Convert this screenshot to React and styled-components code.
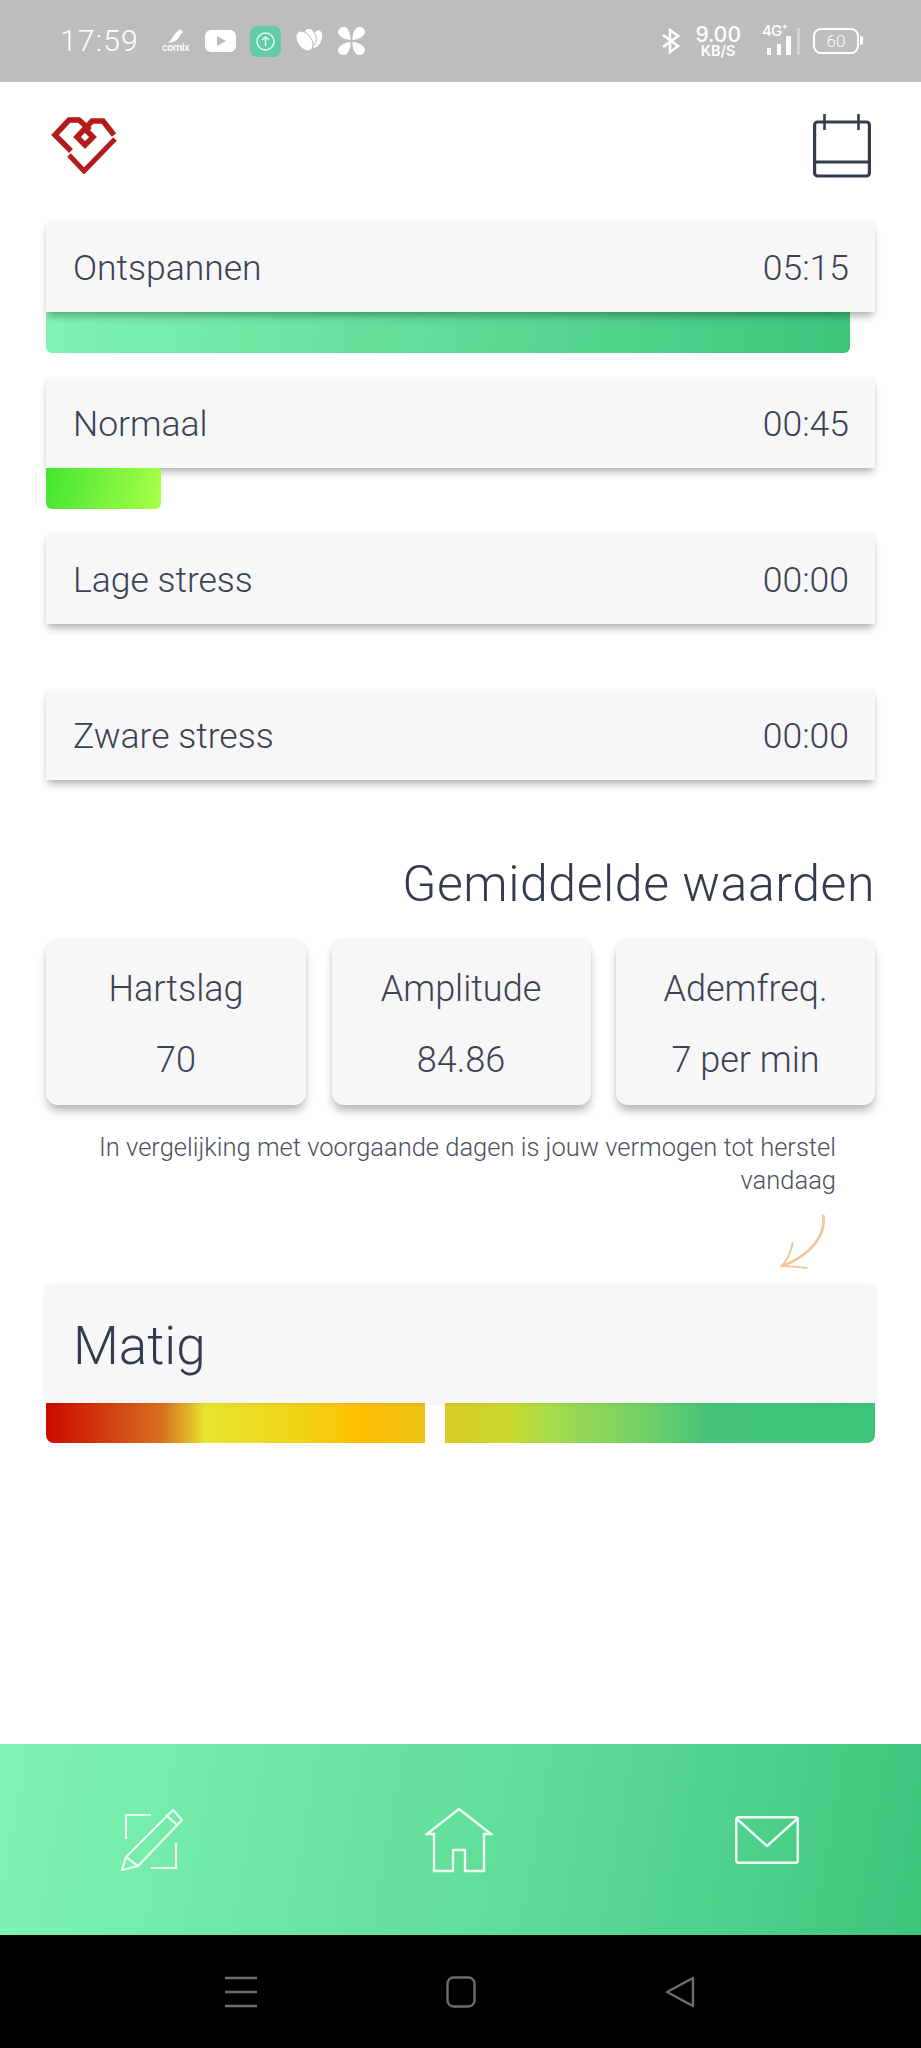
import React from "react";
import styled, { createGlobalStyle } from "styled-components";

const Global = createGlobalStyle`
  html, body { margin: 0; padding: 0; background: #fff; }
  body { font-family: Roboto, "Liberation Sans", sans-serif; font-weight: 300; color: #3a4254; }
  * { box-sizing: border-box; }
`;

const Page = styled.div`
  width: 921px; height: 2048px; display: flex; flex-direction: column; background: #fff; overflow: hidden;
`;
const StatusBar = styled.div`
  height: 82px; flex: none; background: #bdbdbd; color: #fff; display: flex; align-items: center;
  justify-content: space-between; padding: 0 58px 0 60px;
`;
const StatusGroup = styled.div`
  display: flex; align-items: center; gap: ${p => p.$gap || 0}px;
`;
const Clock = styled.span`
  font-size: 30px; font-weight: 300; letter-spacing: 1.2px; margin-right: 9px; line-height: 1;
`;
const Comix = styled.span`
  position: relative; width: 29px; height: 24px; display: block;
  span { position: absolute; left: 0; bottom: 0; font: 500 10.5px/10px Roboto, sans-serif; color: #fff; letter-spacing: -.2px; }
  svg { position: absolute; left: 5px; top: 0; }
`;
const Speed = styled.span`
  display: flex; flex-direction: column; align-items: center; line-height: 1; font-family: Inter, Roboto, sans-serif;
  margin-left: 14px;
  b { font-size: 21px; font-weight: 500; line-height: 19px; }
  i { font-size: 14.5px; font-style: normal; font-weight: 600; line-height: 14px; }
`;
const NetLabel = styled.span`
  position: absolute; left: 0; top: -3px; font: 500 15px/16px Inter, Roboto, sans-serif; color: #fff; letter-spacing: -.8px;
`;
const NetWrap = styled.span`
  position: relative; display: block; width: 40px; height: 30px; margin-left: 21px;
`;
const Battery = styled.span`
  position: relative; width: 46px; height: 26px; border: 2.5px solid #fff; border-radius: 8px; display: flex;
  align-items: center; justify-content: center; font-size: 17px; font-weight: 300; color: #fff; margin: 0 4px 0 11px;
  &::after { content: ""; position: absolute; right: -6px; top: 6px; width: 3px; height: 9px; background: #fff; border-radius: 0 2px 2px 0; }
`;
const Header = styled.div`
  height: 140px; flex: none; display: flex; align-items: flex-start; justify-content: space-between;
  padding: 32px 50px 0 50px;
`;
const Rows = styled.div`
  display: flex; flex-direction: column; gap: 25px; padding: 0 46px;
`;
const RowBlock = styled.div`
  height: 131px; display: flex; flex-direction: column;
`;
const Card = styled.div`
  background: #f7f7f8; border-radius: 4px 4px 0 0; box-shadow: 0 6px 9px -2px rgba(0,0,0,.3), 0 0 4px rgba(0,0,0,.06);
  position: relative; z-index: 1;
`;
const RowHead = styled(Card)`
  height: 90px; flex: none; display: flex; align-items: center; justify-content: space-between;
  padding: 2px 26px 0 27px; font-size: 35.5px;
`;
const Fill = styled.div`
  height: 41px; border-radius: 0 0 6px 6px; position: relative; z-index: ${p => p.$top ? 2 : 0};
  background: linear-gradient(100deg, ${p => p.$from}, ${p => p.$to});
`;
const Title = styled.h2`
  margin: 32px 46px 0 0; text-align: right; font-size: 50px; font-weight: 300; line-height: 63px; letter-spacing: .55px; color: #333b4e;
`;
const Stats = styled.div`
  display: grid; grid-template-columns: 260px 259px 259px; justify-content: space-between; padding: 0 46px; margin-top: 23px;
`;
const Stat = styled.div`
  height: 166px; background: #f7f7f8; border-radius: 12px; box-shadow: 0 7px 10px -1px rgba(0,0,0,.27), 0 0 4px rgba(0,0,0,.06);
  display: flex; flex-direction: column; align-items: center; font-size: 36px; padding-top: 28px; line-height: 44px; gap: 27px; color: #3c4354;
`;
const Note = styled.p`
  margin: 26px 85px 0 90px; text-align: right; font-size: 25.5px; line-height: 33px; color: #4b5261;
`;
const ArrowBox = styled.div`
  height: 89px; display: flex; justify-content: flex-end; padding: 16px 92px 0 0;
`;
const MatigHead = styled(Card)`
  height: 117px; display: flex; align-items: center; padding: 3px 27px 0; font-size: 53px; color: #333b4e;
  box-shadow: 0 0 5px rgba(0,0,0,.1);
  border-radius: 6px 6px 0 0;
`;
const MatigBar = styled.div`
  height: 40px; position: relative; border-radius: 0 0 8px 8px; margin: 0 46px;
  background: linear-gradient(90deg, #cb0a00 0%, #d96f1e 14%, #e7e52f 19.2%, #f2d316 31%, #ffbd00 38.3%, #e9c311 45.7%, #d9cb25 48%, #c9d930 56%, #a8dc4c 60.5%, #6ecf69 73%, #45c47a 80%, #3ec57c 100%);
`;
const Marker = styled.div`
  position: absolute; left: 379px; top: 0; bottom: 0; width: 20px; background: #fff;
`;
const Nav = styled.div`
  margin-top: auto; height: 191px; flex: none; display: flex; align-items: center; justify-content: space-between;
  padding: 0 122px 0 121px; background: linear-gradient(100deg, #80f4b2 0%, #5ddb96 60%, #3ec57c 100%);
`;
const SystemBar = styled.div`
  height: 113px; flex: none; background: #000; display: flex; align-items: center; justify-content: space-between; padding: 1px 226px 0 225px;
`;

const Logo = () => (
  <svg width="68" height="60" viewBox="50 114 68 60" fill="none" stroke="#b21c1a" strokeWidth="5.5" strokeLinejoin="miter">
    <path d="M71 151 L55 135 L69 120 L79 120 L90 130" />
    <path d="M114 135 L103 121 L92 121 L77 137 L85 145 L93 137 L85 129" />
    <path d="M69 155 L84 171 L115 139" strokeWidth="5" />
  </svg>
);
const Calendar = () => (
  <svg width="58" height="66" viewBox="0 0 58 66" fill="none" stroke="#343c4c" strokeWidth="3.2">
    <rect x="1.6" y="8" width="54.8" height="54" rx="3" />
    <path d="M2 48 H56" />
    <path d="M11.5 0 V16 M45.5 0 V16" strokeWidth="2.6" />
  </svg>
);
const Arrow = () => (
  <svg width="50" height="58" viewBox="0 0 50 58" fill="none" stroke="#efc79b" strokeWidth="2" strokeLinecap="round">
    <path d="M44.3 3 C47 20 34 42 3 53" strokeWidth="2.8" />
    <path d="M13.7 30 C12 38 9 46 3 53 C10 53 19 54 27.7 55" />
  </svg>
);
const PencilIcon = () => (
  <svg width="62" height="62" viewBox="0 0 62 62" fill="none" stroke="#e9fff3" strokeWidth="2.2">
    <path d="M30 6 H5 V30 M55 34 V59 H30" />
    <path d="M1 61 L5 48 L52 1 L61 11 L17 57 Z" />
    <path d="M45 6 L56 16 M5 48 L17 57" />
  </svg>
);
const HomeIcon = () => (
  <svg width="68" height="66" viewBox="0 0 68 66" fill="none" stroke="#f0fff6" strokeWidth="2.4">
    <path d="M34 2 L66 27 H59 V64 H40 V43 H28 V64 H9 V27 H2 Z" />
  </svg>
);
const MailIcon = () => (
  <svg width="64" height="48" viewBox="0 0 64 48" fill="none" stroke="#f0fff6" strokeWidth="2.4" strokeLinejoin="round">
    <rect x="1.3" y="1.3" width="61.4" height="45.4" rx="2" />
    <path d="M2 3 L32 30 L62 3" />
  </svg>
);

const rows = [
  { label: "Ontspannen", time: "05:15", fill: "97%", from: "#80f4b2", to: "#3ec57c" },
  { label: "Normaal", time: "00:45", fill: "13.9%", from: "#44e532", to: "#a9ff47" },
  { label: "Lage stress", time: "00:00" },
  { label: "Zware stress", time: "00:00" },
];
const stats = [["Hartslag", "70"], ["Amplitude", "84.86"], ["Ademfreq.", "7 per min"]];

export default function App() {
  return (
    <Page>
      <Global />
      <StatusBar>
        <StatusGroup $gap={14}>
          <Clock>17:59</Clock>
          <Comix>
            <svg width="18" height="14" viewBox="0 0 18 14" fill="#fff"><path d="M1 14 C4 12 7 5 10 3 L13 0 L16 3 L13 6 C12 10 8 13 1 14Z" /></svg>
            <span>comix</span>
          </Comix>
          <svg width="31" height="22" viewBox="0 0 31 22"><rect width="31" height="22" rx="6" fill="#fff" /><path d="M12 6 L21 11 L12 16Z" fill="#bdbdbd" /></svg>
          <svg width="31" height="31" viewBox="0 0 31 31" fill="none"><rect width="31" height="31" rx="7" fill="#63cba6" /><circle cx="15.5" cy="15.5" r="8.5" stroke="#e8fff6" strokeWidth="1.4" /><path d="M15.5 20 V11 M12 14 L15.5 11 L19 14" stroke="#e8fff6" strokeWidth="1.4" /></svg>
          <svg width="28" height="24" viewBox="0 0 28 24" fill="#fff" stroke="#bdbdbd" strokeWidth="1"><ellipse cx="21.5" cy="10" rx="5.5" ry="9.5" transform="rotate(20 21.5 10)" /><ellipse cx="15" cy="8" rx="6" ry="9" transform="rotate(-15 15 8)" /><ellipse cx="9.5" cy="12" rx="7" ry="11" transform="rotate(-35 9.5 12)" /></svg>
          <svg width="29" height="28" viewBox="0 0 29 28" fill="#fff"><path d="M13.5 13 C8 13 1 9 1 5 C1 2 4 0 7 0 C11 0 14 7 13.5 13Z" /><path d="M15.5 13 C21 13 28 9 28 5 C28 2 25 0 22 0 C18 0 15 7 15.5 13Z" /><path d="M13.5 15 C8 15 1 19 1 23 C1 26 4 28 7 28 C11 28 14 21 13.5 15Z" /><path d="M15.5 15 C21 15 28 19 28 23 C28 26 25 28 22 28 C18 28 15 21 15.5 15Z" /></svg>
        </StatusGroup>
        <StatusGroup>
          <svg width="20" height="26" viewBox="0 0 20 26" fill="none" stroke="#fff" strokeWidth="2.6"><path d="M2 7 L17 18 L9 24 V2 L17 8 L2 19" /></svg>
          <Speed><b>9.00</b><i>KB/S</i></Speed>
          <NetWrap>
            <NetLabel>4G⁺</NetLabel>
            <svg width="40" height="30" viewBox="0 0 40 30" fill="#fff"><rect x="5" y="22" width="4" height="7" /><rect x="15" y="18" width="4" height="11" /><rect x="24" y="10" width="5" height="19" /><rect x="35" y="2" width="3" height="27" opacity=".35" /></svg>
          </NetWrap>
          <Battery>60</Battery>
        </StatusGroup>
      </StatusBar>
      <Header>
        <Logo />
        <Calendar />
      </Header>
      <Rows>
        {rows.map((r, i) => (
          <RowBlock key={r.label}>
            <RowHead><span>{r.label}</span><span>{r.time}</span></RowHead>
            {r.fill && <Fill $from={r.from} $to={r.to} $top={i === 1} style={{ width: r.fill }} />}
          </RowBlock>
        ))}
      </Rows>
      <Title>Gemiddelde waarden</Title>
      <Stats>
        {stats.map(([a, b]) => <Stat key={a}><span>{a}</span><span>{b}</span></Stat>)}
      </Stats>
      <Note>In vergelijking met voorgaande dagen is jouw vermogen tot herstel vandaag</Note>
      <ArrowBox><Arrow /></ArrowBox>
      <Rows>
        <MatigHead>Matig</MatigHead>
      </Rows>
      <MatigBar><Marker /></MatigBar>
      <Nav>
        <PencilIcon />
        <HomeIcon />
        <MailIcon />
      </Nav>
      <SystemBar>
        <svg width="32" height="32" viewBox="0 0 32 32" stroke="#6e6e6e" strokeWidth="2.4"><path d="M0 2 H32 M0 16 H32 M0 30 H32" /></svg>
        <svg width="30" height="32" viewBox="0 0 30 32" fill="none" stroke="#6e6e6e" strokeWidth="2.4"><rect x="1.5" y="1.5" width="27" height="29" rx="6" /></svg>
        <svg width="30" height="32" viewBox="0 0 30 32" fill="none" stroke="#6e6e6e" strokeWidth="2.4" strokeLinejoin="round"><path d="M28 2 V30 L2 16 Z" /></svg>
      </SystemBar>
    </Page>
  );
}
